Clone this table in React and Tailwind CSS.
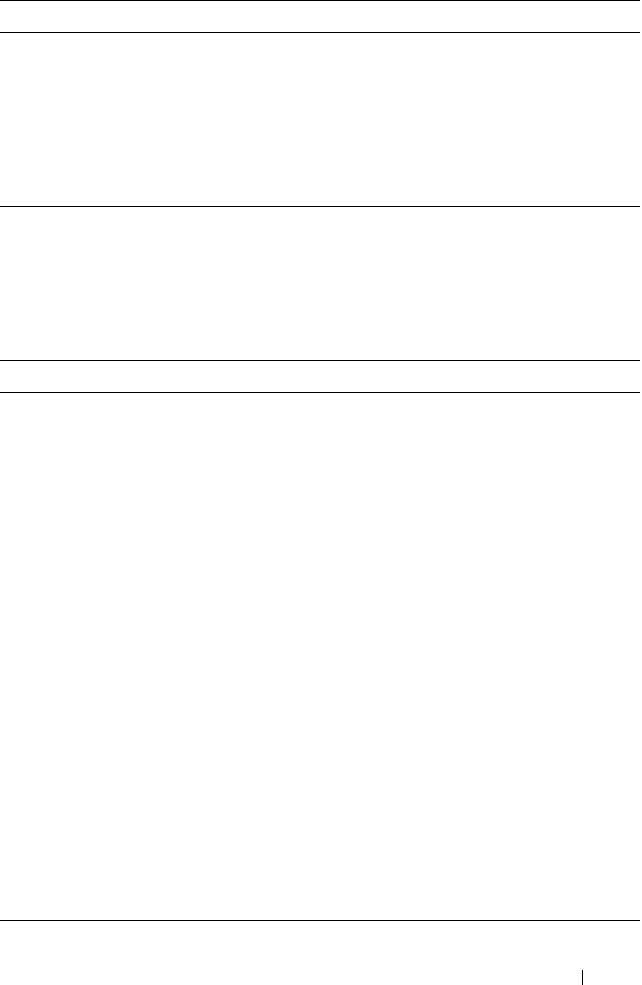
export default function App() {
  return (
    <div className="min-h-[985px] w-[642px] bg-white">
      {/* empty table rows */}
      <div className="w-[640px]">
        <div className="h-[33px] border-t border-b border-black"></div>
        <div className="h-[174px] border-b border-black"></div>
        <div className="h-[154px] border-b border-black"></div>
        <div className="h-[32px] border-b border-black"></div>
        <div className="h-[528px] border-b border-black"></div>
      </div>

      {/* page footer marker */}
      <div className="mt-[49px] flex">
        <div className="ml-[582px] h-[15px] w-px bg-black"></div>
      </div>
    </div>
  );
}
